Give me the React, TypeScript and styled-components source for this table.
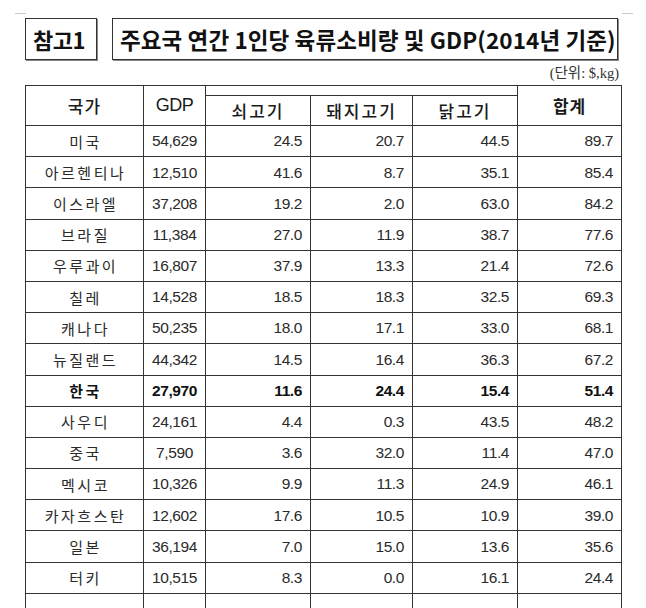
import styled, { createGlobalStyle } from "styled-components";

const rows: TRow[] = [
  { country: "미국", gdp: "54,629", beef: "24.5", pork: "20.7", chicken: "44.5", total: "89.7" },
  { country: "아르헨티나", gdp: "12,510", beef: "41.6", pork: "8.7", chicken: "35.1", total: "85.4" },
  { country: "이스라엘", gdp: "37,208", beef: "19.2", pork: "2.0", chicken: "63.0", total: "84.2" },
  { country: "브라질", gdp: "11,384", beef: "27.0", pork: "11.9", chicken: "38.7", total: "77.6" },
  { country: "우루과이", gdp: "16,807", beef: "37.9", pork: "13.3", chicken: "21.4", total: "72.6" },
  { country: "칠레", gdp: "14,528", beef: "18.5", pork: "18.3", chicken: "32.5", total: "69.3" },
  { country: "캐나다", gdp: "50,235", beef: "18.0", pork: "17.1", chicken: "33.0", total: "68.1" },
  { country: "뉴질랜드", gdp: "44,342", beef: "14.5", pork: "16.4", chicken: "36.3", total: "67.2" },
  { country: "한국", gdp: "27,970", beef: "11.6", pork: "24.4", chicken: "15.4", total: "51.4", highlight: true },
  { country: "사우디", gdp: "24,161", beef: "4.4", pork: "0.3", chicken: "43.5", total: "48.2" },
  { country: "중국", gdp: "7,590", beef: "3.6", pork: "32.0", chicken: "11.4", total: "47.0" },
  { country: "멕시코", gdp: "10,326", beef: "9.9", pork: "11.3", chicken: "24.9", total: "46.1" },
  { country: "카자흐스탄", gdp: "12,602", beef: "17.6", pork: "10.5", chicken: "10.9", total: "39.0" },
  { country: "일본", gdp: "36,194", beef: "7.0", pork: "15.0", chicken: "13.6", total: "35.6" },
  { country: "터키", gdp: "10,515", beef: "8.3", pork: "0.0", chicken: "16.1", total: "24.4" },
];

export default function App() {
  return (
    <>
      <GlobalStyle />
      <SPage>
        <SCornerMarks>
          <SMark />
          <SMark />
        </SCornerMarks>
        <SHeading>
          <SLabelBox children="참고1" />
          <STitleBox children="주요국 연간 1인당 육류소비량 및 GDP(2014년 기준)" />
        </SHeading>
        <SUnit children="(단위: $,kg)" />
        <STable>
          <colgroup>
            <col style={{ width: 118 }} />
            <col style={{ width: 62 }} />
            <col style={{ width: 105 }} />
            <col style={{ width: 102 }} />
            <col style={{ width: 105 }} />
            <col style={{ width: 104 }} />
          </colgroup>
          <thead>
            <STopHeadRow>
              <SHeadCell rowSpan={2} children="국가" />
              <SHeadCell rowSpan={2} $latin children="GDP" />
              <SSpacerCell colSpan={3} />
              <SHeadCell rowSpan={2} $bold children="합계" />
            </STopHeadRow>
            <SSubHeadRow>
              <SHeadCell $spaced children="쇠고기" />
              <SHeadCell $spaced children="돼지고기" />
              <SHeadCell $spaced children="닭고기" />
            </SSubHeadRow>
          </thead>
          <tbody>
            {rows.map((r) => (
              <SRow key={r.country} $highlight={r.highlight}>
                <SNameCell children={r.country} />
                <SGdpCell children={r.gdp} />
                <SNumCell children={r.beef} />
                <SNumCell children={r.pork} />
                <SNumCell children={r.chicken} />
                <SNumCell children={r.total} />
              </SRow>
            ))}
            <SRow>
              <SNameCell />
              <SGdpCell />
              <SNumCell />
              <SNumCell />
              <SNumCell />
              <SNumCell />
            </SRow>
          </tbody>
        </STable>
      </SPage>
    </>
  );
}

// #region Styles

const GlobalStyle = createGlobalStyle`
  html, body {
    margin: 0;
    background: #fff;
    overflow: hidden;
  }
  body {
    font-family: "Noto Sans CJK KR", "Liberation Sans", sans-serif;
    color: #222;
  }
`;

const SPage = styled.div`
  width: 646px;
  height: 608px;
  overflow: hidden;
  box-sizing: border-box;
  padding: 13px 0 0 25px;
`;

const SCornerMarks = styled.div`
  display: flex;
  justify-content: space-between;
  width: 618px;
  margin-left: -10px;
  height: 1px;
`;

const SMark = styled.span`
  display: block;
  width: 11px;
  height: 1px;
  background: #c8c8c8;
`;

const SHeading = styled.div`
  display: flex;
  gap: 15px;
  width: 593px;
  margin-top: 4px;
`;

const SBox = styled.div`
  box-sizing: border-box;
  height: 42px;
  border: 1px solid #333;
  box-shadow: 1px 1px 0 #888;
  display: flex;
  align-items: center;
  font-family: "Noto Sans CJK KR", sans-serif;
  font-weight: 700;
  font-size: 22px;
  color: #111;
  white-space: nowrap;
`;

const SLabelBox = styled(SBox)`
  width: 72px;
  padding-left: 7px;
  letter-spacing: -0.5px;
`;

const STitleBox = styled(SBox)`
  flex: 1;
  padding-left: 7px;
  font-size: 22.5px;
  letter-spacing: 0.1px;
`;

const SUnit = styled.div`
  width: 594px;
  height: 25px;
  line-height: 27px;
  text-align: right;
  font-family: "Liberation Serif", "Noto Sans CJK KR", serif;
  font-size: 14.5px;
  color: #333;
`;

const STable = styled.table`
  border-collapse: collapse;
  table-layout: fixed;
  width: 596px;
  border: 1.5px solid #222;

  td,
  th {
    border: 1px solid #333;
    padding: 0;
  }
`;

const STopHeadRow = styled.tr`
  height: 10px;
`;

const SSubHeadRow = styled.tr`
  height: 30px;
`;

const SSpacerCell = styled.th`
  height: 9px;
`;

const SHeadCell = styled.th<{ $latin?: boolean; $spaced?: boolean; $bold?: boolean }>`
  text-align: center;
  vertical-align: middle;
  font-family: ${(p) => (p.$latin ? '"Liberation Sans", sans-serif' : '"Noto Sans CJK KR", sans-serif')};
  font-size: ${(p) => (p.$latin ? "18px" : "17px")};
  font-weight: ${(p) => (p.$bold ? 700 : 500)};
  letter-spacing: ${(p) => (p.$spaced ? "2px" : p.$latin ? "-0.5px" : "1px")};
  color: #1a1a1a;
`;

const SRow = styled.tr<{ $highlight?: boolean }>`
  height: 31.2px;
  font-weight: ${(p) => (p.$highlight ? 700 : 400)};
  color: ${(p) => (p.$highlight ? "#111" : "#2a2a2a")};
`;

const SNameCell = styled.td`
  text-align: center;
  font-family: "Noto Sans CJK KR", sans-serif;
  font-size: 15px;
  letter-spacing: 2.5px;
  padding-left: 2px !important;
  white-space: nowrap;
  line-height: 1;
`;

const SGdpCell = styled.td`
  text-align: center;
  font-family: "Liberation Sans", sans-serif;
  font-size: 15.5px;
  letter-spacing: -0.4px;
  white-space: nowrap;
  line-height: 1;
`;

const SNumCell = styled.td`
  text-align: right;
  padding-right: 8px !important;
  font-family: "Liberation Sans", sans-serif;
  font-size: 15.5px;
  letter-spacing: -0.4px;
  line-height: 1;
`;

// #endregion

// #region Types

type TRow = {
  country: string;
  gdp: string;
  beef: string;
  pork: string;
  chicken: string;
  total: string;
  highlight?: boolean;
};

// #endregion
